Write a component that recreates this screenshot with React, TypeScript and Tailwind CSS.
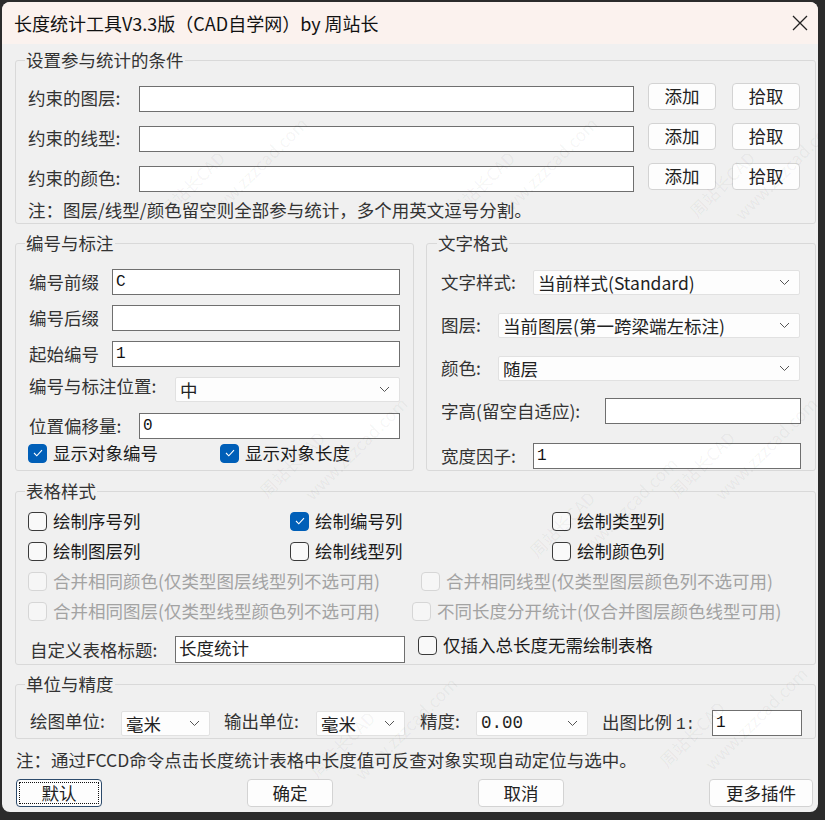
import React from 'react';

const sans = "font-['Noto_Sans_CJK_SC',sans-serif]";
const mono = "font-['Liberation_Mono','Noto_Sans_CJK_SC',monospace]";

function TextBox({ value = '', className = '' }: { value?: string; className?: string }) {
  return (
    <div
      className={`border border-[#6f6f6f] bg-white pl-[3px] text-[16px] leading-[24px] text-[#111] ${mono} ${className}`}
    >
      {value}
    </div>
  );
}

function Chevron() {
  return (
    <svg width="11" height="7" viewBox="0 0 11 7" className="shrink-0">
      <polyline points="1,1 5.5,5.5 10,1" fill="none" stroke="#555" strokeWidth="1" />
    </svg>
  );
}

function Combo({ value, className = '' }: { value: string; className?: string }) {
  return (
    <div
      className={`flex items-center justify-between rounded-[2px] border border-[#e1e1e1] bg-[#fdfdfd] pl-[4px] pr-[9px] text-[17.5px] leading-[23px] text-[#222] ${className}`}
    >
      <span className="whitespace-nowrap">{value}</span>
      <Chevron />
    </div>
  );
}

function Btn({ label, className = '' }: { label: string; className?: string }) {
  return (
    <button
      className={`flex items-center justify-center rounded-[4px] border border-[#d3d3d3] bg-[#fdfdfd] text-[17.5px] text-[#222] ${className}`}
    >
      {label}
    </button>
  );
}

function Check({
  label,
  checked = false,
  disabled = false,
  className = '',
}: {
  label: string;
  checked?: boolean;
  disabled?: boolean;
  className?: string;
}) {
  let box = 'border-[#3a3a3a] bg-[#f9f9f9]';
  if (checked) box = 'border-[#005fb8] bg-[#005fb8]';
  if (disabled) box = 'border-[#d6d6d6] bg-[#f6f6f6]';
  return (
    <div className={`flex items-center whitespace-nowrap ${className}`}>
      <span className={`flex h-[19px] w-[19px] shrink-0 items-center justify-center rounded-[4px] border ${box}`}>
        {checked && (
          <svg width="12" height="10" viewBox="0 0 12 10">
            <polyline points="2,5 4.8,7.8 10,2.2" fill="none" stroke="#fff" strokeWidth="1.1" />
          </svg>
        )}
      </span>
      <span className={`ml-[6px] text-[17.5px] leading-[20px] ${disabled ? 'text-[#a3a3a3]' : 'text-[#1b1b1b]'}`}>
        {label}
      </span>
    </div>
  );
}

function Group({
  title,
  className = '',
  legendClass = 'ml-[9px]',
  children,
}: {
  title: string;
  className?: string;
  legendClass?: string;
  children: React.ReactNode;
}) {
  return (
    <fieldset className={`rounded-[3px] border border-[#d9d9d9] ${className}`}>
      <legend className={`px-[1px] text-[17.5px] leading-[20px] text-[#333] ${legendClass}`}>{title}</legend>
      {children}
    </fieldset>
  );
}

// watermark stamps, kept inside the dialog
const marks = [
  { x: 150, y: 140 },
  { x: 440, y: 140 },
  { x: 680, y: 140 },
  { x: 250, y: 420 },
  { x: 520, y: 480 },
  { x: 660, y: 420 },
  { x: 300, y: 700 },
  { x: 650, y: 690 },
];

export default function App() {
  const conditionRows = ['约束的图层:', '约束的线型:', '约束的颜色:'];

  return (
    <div className={`h-[820px] w-[825px] bg-[#2b2b2b] pl-[2px] pt-[2px] ${sans}`}>
      <div className="relative h-[810px] w-[816px] overflow-hidden rounded-[8px] bg-[#f0f0f0]">
        {/* title bar */}
        <div className="flex h-[42px] items-center justify-between bg-[#fbf2ee] pl-[12px] pr-[10px]">
          <span className="text-[18px] leading-[24px] text-[#111]">长度统计工具V3.3版（CAD自学网）by 周站长</span>
          <svg width="16" height="16" viewBox="0 0 16 16">
            <path d="M1 1 L15 15 M15 1 L1 15" stroke="#222" strokeWidth="1.3" />
          </svg>
        </div>

        <div className="pl-[13px]">
          {/* conditions */}
          <Group title="设置参与统计的条件" className="mt-[6px] w-[801px]">
            <div className="flex flex-col pb-[3px] pl-[12px] pt-[13px]">
              {conditionRows.map((label) => (
                <div key={label} className="flex h-[40px] items-start">
                  <span className="mt-[2px] w-[111px] text-[17.5px] leading-[26px] text-[#333]">{label}</span>
                  <TextBox className="mt-[3px] h-[26px] w-[495px]" />
                  <Btn label="添加" className="ml-[14px] h-[27px] w-[68px]" />
                  <Btn label="拾取" className="ml-[16px] h-[27px] w-[68px]" />
                </div>
              ))}
              <div className="-mt-[3px] text-[17.5px] leading-[20px] text-[#333]">
                注：图层/线型/颜色留空则全部参与统计，多个用英文逗号分割。
              </div>
            </div>
          </Group>

          <div className="mt-[9px] flex gap-[12px]">
            {/* numbering */}
            <Group title="编号与标注" className="w-[399px]">
              <div className="flex flex-col pb-[7px] pl-[13px] text-[17.5px] text-[#333]">
                <div className="mt-[16px] flex h-[26px] items-center">
                  <span className="w-[83px]">编号前缀</span>
                  <TextBox value="C" className="h-[26px] w-[288px]" />
                </div>
                <div className="mt-[10px] flex h-[26px] items-center">
                  <span className="w-[83px]">编号后缀</span>
                  <TextBox className="h-[26px] w-[288px]" />
                </div>
                <div className="mt-[10px] flex h-[26px] items-center">
                  <span className="w-[83px]">起始编号</span>
                  <TextBox value="1" className="h-[26px] w-[288px]" />
                </div>
                <div className="mt-[10px] flex h-[25px] items-center">
                  <span className="-mt-[6px] w-[146px]">编号与标注位置:</span>
                  <Combo value="中" className="h-[25px] w-[225px]" />
                </div>
                <div className="mt-[11px] flex h-[26px] items-center">
                  <span className="w-[110px]">位置偏移量:</span>
                  <TextBox value="0" className="h-[26px] w-[261px]" />
                </div>
                <div className="-ml-[1px] mt-[4px] flex h-[20px] items-center">
                  <Check label="显示对象编号" checked className="w-[192px]" />
                  <Check label="显示对象长度" checked />
                </div>
              </div>
            </Group>

            {/* text format */}
            <Group title="文字格式" className="w-[390px]" legendClass="ml-[10px]">
              <div className="flex flex-col pb-[1px] pl-[14px] text-[17.5px] text-[#333]">
                <div className="mt-[17px] flex h-[25px] items-center">
                  <span className="w-[92px]">文字样式:</span>
                  <Combo value="当前样式(Standard)" className="h-[25px] w-[267px]" />
                </div>
                <div className="mt-[18px] flex h-[25px] items-center">
                  <span className="w-[57px]">图层:</span>
                  <Combo value="当前图层(第一跨梁端左标注)" className="h-[25px] w-[302px]" />
                </div>
                <div className="mt-[18px] flex h-[25px] items-center">
                  <span className="w-[57px]">颜色:</span>
                  <Combo value="随层" className="h-[25px] w-[302px]" />
                </div>
                <div className="mt-[17px] flex h-[26px] items-center">
                  <span className="w-[164px]">字高(留空自适应):</span>
                  <TextBox className="h-[26px] w-[196px]" />
                </div>
                <div className="mt-[19px] flex h-[26px] items-center">
                  <span className="w-[92px]">宽度因子:</span>
                  <TextBox value="1" className="h-[26px] w-[268px]" />
                </div>
              </div>
            </Group>
          </div>

          {/* table style */}
          <Group title="表格样式" className="mt-[10px] w-[801px]">
            <div className="flex flex-col pb-[1px] pl-[12px] pt-[5px]">
              <div className="grid h-[30px] grid-cols-[262px_262px_262px] items-center">
                <Check label="绘制序号列" />
                <Check label="绘制编号列" checked />
                <Check label="绘制类型列" />
              </div>
              <div className="grid h-[30px] grid-cols-[262px_262px_262px] items-center">
                <Check label="绘制图层列" />
                <Check label="绘制线型列" />
                <Check label="绘制颜色列" />
              </div>
              <div className="flex h-[30px] items-center">
                <Check label="合并相同颜色(仅类型图层线型列不选可用)" disabled className="w-[393px]" />
                <Check label="合并相同线型(仅类型图层颜色列不选可用)" disabled />
              </div>
              <div className="flex h-[30px] items-center">
                <Check label="合并相同图层(仅类型线型颜色列不选可用)" disabled className="w-[384px]" />
                <Check label="不同长度分开统计(仅合并图层颜色线型可用)" disabled />
              </div>
              <div className="mt-[10px] flex h-[27px] items-start">
                <span className="ml-[2px] w-[145px] text-[17.5px] leading-[27px] text-[#333]">自定义表格标题:</span>
                <div className="h-[27px] w-[230px] border border-[#6f6f6f] bg-white pl-[3px] text-[17.5px] leading-[22px] text-[#222]">
                  长度统计
                </div>
                <Check label="仅插入总长度无需绘制表格" className="ml-[13px] -mt-[1px]" />
              </div>
            </div>
          </Group>

          {/* units */}
          <Group title="单位与精度" className="mt-[9px] w-[801px]">
            <div className="mb-[2px] mt-[16px] flex h-[26px] items-center pl-[14px] text-[17.5px] text-[#333]">
              <span className="-mt-[4px] w-[91px]">绘图单位:</span>
              <Combo value="毫米" className="h-[25px] w-[89px]" />
              <span className="-mt-[4px] ml-[14px] w-[92px]">输出单位:</span>
              <Combo value="毫米" className="h-[25px] w-[89px]" />
              <span className="-mt-[4px] ml-[15px] w-[56px]">精度:</span>
              <Combo value="0.00" className={`h-[25px] w-[112px] ${mono} text-[16px]`} />
              <span className="ml-[14px] w-[110px]">
                出图比例 <span className={`${mono} text-[16px]`}>1:</span>
              </span>
              <TextBox value="1" className="h-[26px] w-[90px]" />
            </div>
          </Group>

          <div className="ml-[1px] mt-[11px] text-[17.5px] leading-[20px] text-[#333]">
            注：通过FCCD命令点击长度统计表格中长度值可反查对象实现自动定位与选中。
          </div>

          {/* footer buttons */}
          <div className="mt-[9px] flex h-[28px] pl-[1px]">
            <button className="relative flex h-[28px] w-[86px] items-center justify-center rounded-[4px] border border-[#2c4a6b] bg-[#fdfdfd] text-[17.5px] text-[#222]">
              <span className="absolute inset-[2px] border border-dotted border-[#111]" />
              默认
            </button>
            <Btn label="确定" className="ml-[145px] h-[28px] w-[86px]" />
            <Btn label="取消" className="ml-[145px] h-[28px] w-[86px]" />
            <Btn label="更多插件" className="ml-[145px] h-[28px] w-[104px]" />
          </div>
        </div>

        {/* faint watermark over the dialog */}
        <div className="pointer-events-none absolute inset-0 overflow-hidden">
          {marks.map((m, i) => (
            <div
              key={i}
              className="absolute -rotate-45 whitespace-nowrap text-[17px] leading-[20px] text-[rgba(0,0,0,0.05)]"
              style={{ left: m.x - 2, top: m.y - 2 }}
            >
              <div>周站长CAD</div>
              <div className="ml-[30px] mt-[14px]">www.zzzcad.com</div>
            </div>
          ))}
        </div>
      </div>
    </div>
  );
}
